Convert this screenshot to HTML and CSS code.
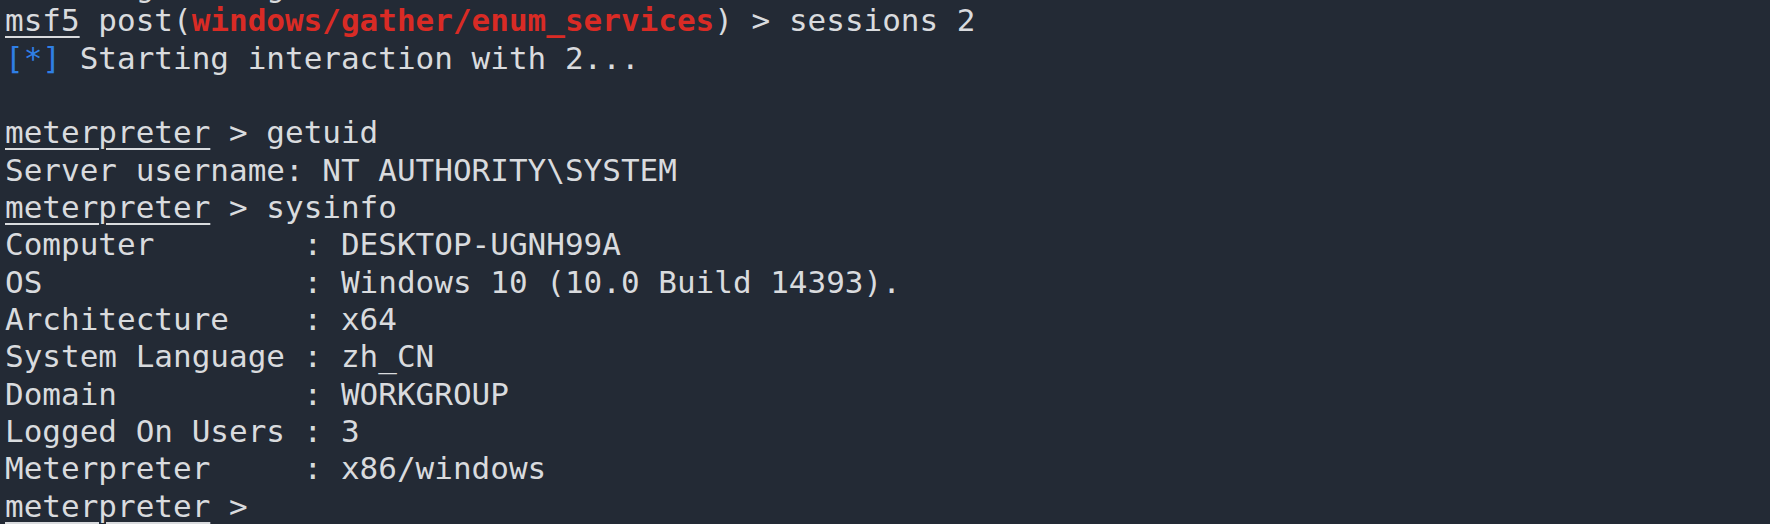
FILE: index.html
```html
<!DOCTYPE html>
<html lang="en">
<head>
<meta charset="utf-8">
<title>meterpreter</title>
<link rel="stylesheet" href="styles.css">
</head>
<body>
<div class="term">
<div class="row row-cut">       g      g</div>
<div class="row"><span class="prompt">msf5</span> post(<span class="mod">windows/gather/enum_services</span>) &gt; sessions 2</div>
<div class="row"><span class="info">[*]</span> Starting interaction with 2...</div>
<div class="row"> </div>
<div class="row"><span class="prompt">meterpreter</span> &gt; getuid</div>
<div class="row">Server username: NT AUTHORITY\SYSTEM</div>
<div class="row"><span class="prompt">meterpreter</span> &gt; sysinfo</div>
<div class="row">Computer        : DESKTOP-UGNH99A</div>
<div class="row">OS              : Windows 10 (10.0 Build 14393).</div>
<div class="row">Architecture    : x64</div>
<div class="row">System Language : zh_CN</div>
<div class="row">Domain          : WORKGROUP</div>
<div class="row">Logged On Users : 3</div>
<div class="row">Meterpreter     : x86/windows</div>
<div class="row"><span class="prompt">meterpreter</span> &gt; </div>
</div>
</body>
</html>
```

FILE: styles.css
```css
html, body {
  margin: 0;
  padding: 0;
  background: #232a35;
  height: 100%;
  overflow: hidden;
}

.term {
  padding: 0 0 0 5px;
  margin-top: -29.65px;
  font-family: "DejaVu Sans Mono", "Liberation Mono", monospace;
  font-size: 31px;
  line-height: 37.35px;
  color: #d9dbde;
}

.row {
  height: 37.35px;
  white-space: pre;
}

.row-cut {
  height: 32px;
  line-height: 32px;
}

.prompt {
  text-decoration: underline;
  text-decoration-thickness: 2px;
  text-underline-offset: 5px;
}

.mod {
  color: #d92b25;
  font-weight: bold;
}

.info {
  color: #2f7fe6;
}
```
